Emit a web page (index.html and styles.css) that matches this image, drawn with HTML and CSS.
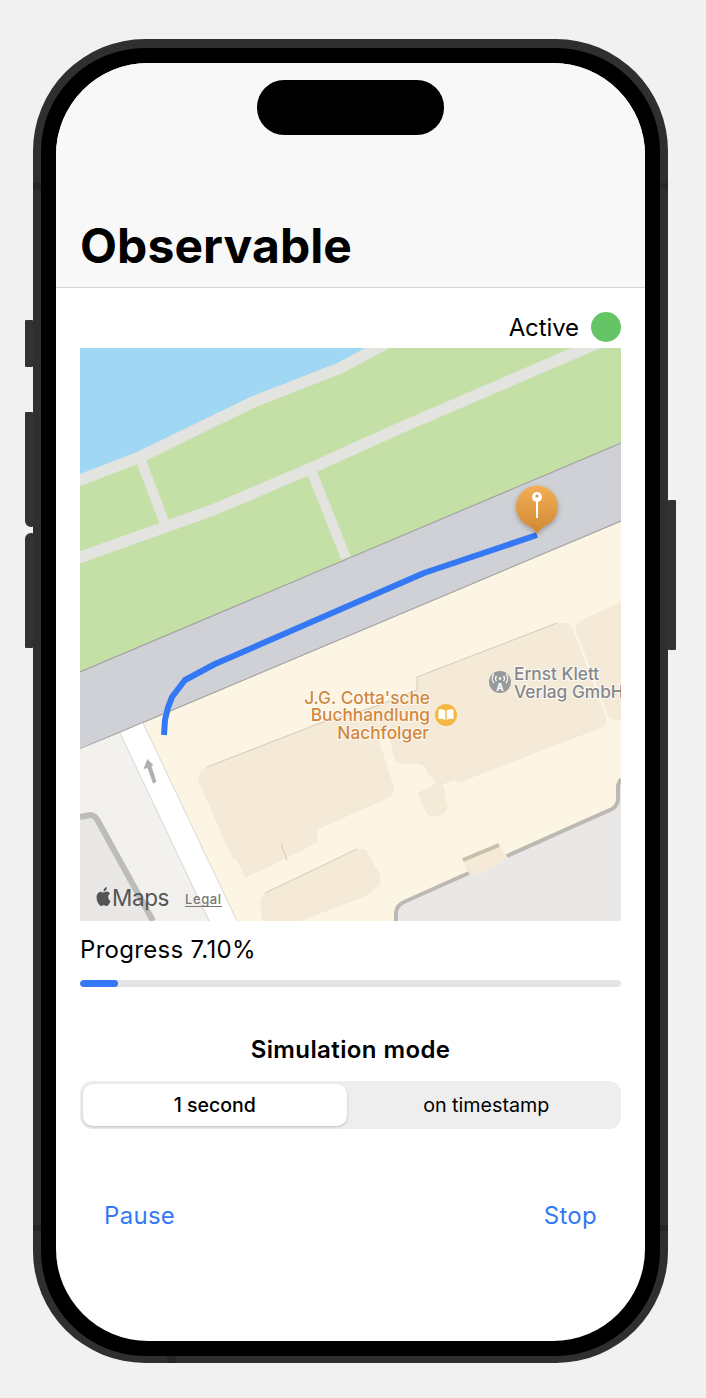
FILE: index.html
```html
<!DOCTYPE html>
<html>
<head>
	<title>Observable</title>
	<meta http-equiv="Content-Type" content="text/html;charset=utf-8">
	<link rel="stylesheet" href="styles.css">
</head>
<body>

	<div class="phone">
		<div class="side-btn mute"></div>
		<div class="side-btn vol-up"></div>
		<div class="side-btn vol-down"></div>
		<div class="side-btn power"></div>
		<div class="band band-lt"></div>
		<div class="band band-rt"></div>
		<div class="band band-lb"></div>
		<div class="band band-rb"></div>
		<div class="band-h"></div>

		<div class="screen">
			<div class="island"></div>

			<div class="navbar">
				<h1 class="nav-title">Observable</h1>
			</div>

			<div class="content">
				<div class="status-row">
					<span class="status-label">Active</span>
					<span class="status-dot"></span>
				</div>

				<!-- map uses page coordinates in its viewBox -->
				<svg class="map" viewBox="80 348 541 573" xmlns="http://www.w3.org/2000/svg">
					<defs>
						<linearGradient id="pinFill" x1="0" y1="0" x2="0" y2="1">
							<stop offset="0" stop-color="#f3ae55"/>
							<stop offset="1" stop-color="#cf8832"/>
						</linearGradient>
						<filter id="pinShadow" x="-30%" y="-30%" width="160%" height="160%">
							<feDropShadow dx="0" dy="2" stdDeviation="2.5" flood-color="#000" flood-opacity=".28"/>
						</filter>
					</defs>

					<!-- ground -->
					<rect x="80" y="348" width="541" height="573" fill="#fdf5e3"/>
					<polygon points="80,348 621,348 621,443 80,672" fill="#c4e0a6"/>
					<polygon points="80,348 373,348 340,368 253,402 140,457 80,480" fill="#a0d8f3"/>

					<!-- paths in the park -->
					<g fill="none" stroke="#e3e3df" stroke-width="11.5">
						<path d="M78,481 L140,457 L253,402 L340,368 L385,344"/>
						<path d="M78,558 L213,510 L307,470 L400,428 L600,342"/>
						<path d="M140,458 L165,524" stroke-width="10"/>
						<path d="M311,470 L346,558" stroke-width="10"/>
					</g>

					<!-- street -->
					<polygon points="80,672 621,443 621,521 80,749" fill="#cfd1d6"/>
					<path d="M80,672 L621,443 M80,749 L621,521" fill="none" stroke="#a3a3a3" stroke-width="1.2"/>

					<!-- left side of the side street -->
					<polygon points="80,749 120,733 210,921 80,921" fill="#f3f1ed"/>
					<path d="M80,819 L90,817 Q95,817 98,823 L152,921 L80,921 Z" fill="#e9e8e6"/>
					<path d="M80,817 L90,815 Q95,815 98,821 L153,921" fill="none" stroke="#bdbcba" stroke-width="6"/>
					<polygon points="120,733 143,723 237,921 210,921" fill="#fff"/>
					<path d="M120,733 L209,921 M143,723 L237,921" fill="none" stroke="#d8d8d6" stroke-width="1"/>
					<path d="M147.3,759 L153.3,765 L151.5,766 L156.5,782 L153,783.5 L147.5,768 L143.5,769 Z" fill="#b0b0b0"/>

					<!-- lower right block -->
					<path d="M396,921 L396,912 Q397,905 404,902 L612,809 Q617,806 618,800 L618,785 L621,779 L621,921 Z" fill="#e9e8e6"/>
					<path d="M396,921 L396,912 Q397,905 404,902 L612,809 Q617,806 618,800 L618,785 L621,779" fill="none" stroke="#bcb9b5" stroke-width="4"/>

					<!-- buildings -->
					<g fill="#f4ead7" stroke-linejoin="round">
						<path d="M207,767 L323,722 L377,706 L417,690 L417,677 L557,623 L565,623 Q571,624 573,630 L607,720 Q607,725 603,727 L458,783 L455,780 L438,786 L427,772 Q424,764 418,764 L402,764 Q397,763 395,760 L388,733 L378,737 L394,788 Q394,794 390,797 L317,830 L318,842 L287,858 L245,878 L237,860 L232,858 L230,853 L198,780 Q198,771 207,767 Z"/>
						<path d="M418,793 L435,784 L443,785 L448,807 Q446,815 437,816 L430,816 Q425,813 423,806 Z"/>
						<path d="M265,893 L357,849 L365,849 L380,875 L380,885 L364,897 L300,921 L262,921 L260,900 Z"/>
						<path d="M575,628 Q580,620 590,616 L621,602 L621,720 L615,720 Q610,719 608,715 Z"/>
						<path d="M463,862 L498,843 L508,858 L480,875 L470,875 Z"/>
					</g>
					<g fill="none" stroke="#d4cab6" stroke-width="1">
						<path d="M207,767 L323,722 L377,706 L417,690 L417,677 L557,623"/>
						<path d="M265,893 L357,849"/>
						<path d="M281,844 L287,860"/>
					</g>
					<path d="M463,860 L499,845" fill="none" stroke="#c8bfab" stroke-width="4"/>

					<!-- route -->
					<path class="route" d="M164,735 L165,720 Q167,708 172,697 L185,680 L215,664 L424,573 L537,535"/>

					<!-- pin -->
					<g filter="url(#pinShadow)">
						<path d="M537,534 Q535,530 529,526 A21,21 0 1 1 545,526 Q539,530 537,534 Z" fill="url(#pinFill)"/>
					</g>
					<line x1="537" y1="497" x2="537" y2="518" stroke="#fff" stroke-width="2"/>
					<circle cx="537" cy="497" r="5" fill="#fff"/>
					<circle cx="537" cy="496" r="1.6" fill="#d99a48"/>

					<!-- places -->
					<g class="poi poi-orange" text-anchor="end">
						<text x="430" y="704">J.G. Cotta'sche</text>
						<text x="430" y="721">Buchhandlung</text>
						<text x="429" y="739">Nachfolger</text>
					</g>
					<circle cx="446" cy="715" r="11" fill="#f4b842"/>
					<path d="M445.3,710.5 Q442,708.8 438.5,709.5 L438.5,719 Q442,718.4 445.3,720 Z M446.7,710.5 Q450,708.8 453.5,709.5 L453.5,719 Q450,718.4 446.7,720 Z" fill="#fff"/>

					<circle cx="500" cy="682" r="11" fill="#98999b"/>
					<text class="antenna-a" x="500" y="691" text-anchor="middle">A</text>
					<path d="M496.5,681 A4,4 0 0 1 496.5,676 M503.5,681 A4,4 0 0 0 503.5,676 M494,683 A7,7 0 0 1 494,674 M506,683 A7,7 0 0 0 506,674" fill="none" stroke="#fff" stroke-width="1.3"/>
					<circle cx="500" cy="678.5" r="1.3" fill="#fff"/>
					<g class="poi poi-gray">
						<text x="514" y="680">Ernst Klett</text>
						<text x="514" y="698">Verlag GmbH</text>
					</g>

					<!-- attribution -->
					<svg x="95" y="887" width="17" height="19" viewBox="0 0 24 24" preserveAspectRatio="none">
						<path fill="#555" d="M12.152 6.896c-.948 0-2.415-1.078-3.96-1.04-2.04.027-3.91 1.183-4.961 3.014-2.117 3.675-.546 9.103 1.519 12.09 1.013 1.454 2.208 3.09 3.792 3.039 1.52-.065 2.09-.987 3.935-.987 1.831 0 2.35.987 3.96.948 1.637-.026 2.676-1.48 3.676-2.948 1.156-1.688 1.636-3.325 1.662-3.415-.039-.013-3.182-1.221-3.22-4.857-.026-3.04 2.48-4.494 2.597-4.559-1.429-2.09-3.623-2.324-4.39-2.376-2-.156-3.675 1.09-4.61 1.09zM15.53 3.83c.843-1.012 1.4-2.427 1.245-3.83-1.207.052-2.662.805-3.532 1.818-.78.896-1.454 2.338-1.273 3.714 1.338.104 2.715-.688 3.559-1.701"/>
					</svg>
					<text class="maps-word" x="112" y="906">Maps</text>
					<text class="maps-legal" x="185" y="904">Legal</text>
					<line x1="185" y1="906.5" x2="222" y2="906.5" stroke="#777" stroke-width="1"/>
				</svg>

				<div class="progress-label">Progress 7.10%</div>
				<div class="progress-track">
					<div class="progress-fill" style="width: 7.1%"></div>
				</div>

				<h2 class="section-title">Simulation mode</h2>
				<div class="segments">
					<div class="segment selected">1 second</div>
					<div class="segment other">on timestamp</div>
				</div>

				<div class="actions">
					<span class="action">Pause</span>
					<span class="action">Stop</span>
				</div>
			</div>
		</div>
	</div>

</body>
</html>
```

FILE: styles.css
```css
body
{
	margin: 0;
	height: 1398px;
	box-sizing: border-box;
	overflow: hidden;
	padding: 39px 0 0 33px;
	background: #f1f1f1;
	font-family: Inter, "Liberation Sans", sans-serif;
	color: #000;
}

/* phone frame */
.phone
{
	position: relative;
	box-sizing: border-box;
	width: 635px;
	height: 1324px;
	padding: 15px;
	background: #000;
	border: 8px solid #2f2f2f;
	border-top-width: 9px;
	border-bottom-width: 7px;
	border-radius: 112px;
}

.side-btn
{
	position: absolute;
	width: 8px;
	background: #333;
	border-radius: 1px;
}

.mute { left: -16px; top: 272px; height: 47px; }
.vol-up { left: -16px; top: 364px; height: 115px; border-bottom-left-radius: 6px; }
.vol-down { left: -16px; top: 485px; height: 115px; border-top-left-radius: 6px; }
.power { right: -16px; top: 452px; height: 150px; }

.band
{
	position: absolute;
	width: 8px;
	height: 6px;
	background: #262626;
}

.band-lt { left: -8px; top: 135px; }
.band-rt { right: -8px; top: 135px; }
.band-lb { left: -8px; top: 1177px; }
.band-rb { right: -8px; top: 1177px; }

.band-h
{
	position: absolute;
	left: 126px;
	bottom: -7px;
	width: 9px;
	height: 7px;
	background: #262626;
}

/* screen */
.screen
{
	position: relative;
	display: flex;
	flex-direction: column;
	width: 589px;
	height: 1278px;
	overflow: hidden;
	background: #fff;
	border-radius: 92px;
}

.island
{
	position: absolute;
	left: 201px;
	top: 17px;
	width: 187px;
	height: 55px;
	background: #000;
	border-radius: 27px;
}

.navbar
{
	box-sizing: border-box;
	height: 225px;
	padding: 151px 24px 0 24px;
	background: #f8f8f8;
	border-bottom: 1px solid #d5d5d5;
}

.nav-title
{
	margin: 0;
	font-size: 48px;
	line-height: 64px;
	font-weight: 700;
	letter-spacing: 0.1px;
}

.content
{
	display: flex;
	flex-direction: column;
	padding: 0 24px;
}

.status-row
{
	display: flex;
	justify-content: flex-end;
	align-items: center;
	gap: 12px;
	height: 30px;
	margin-top: 24px;
	margin-bottom: 6px;
}

.status-label
{
	position: relative;
	top: 1px;
	font-size: 24px;
	line-height: 30px;
	letter-spacing: -0.1px;
}

.status-dot
{
	width: 30px;
	height: 30px;
	border-radius: 50%;
	background: #65c466;
}

.map
{
	display: block;
	width: 541px;
	height: 573px;
}

.route
{
	fill: none;
	stroke: #3478f6;
	stroke-width: 6;
	stroke-linejoin: round;
}

.poi text
{
	font-size: 17.3px;
	font-weight: 500;
	paint-order: stroke;
	stroke: rgba(255, 255, 255, .75);
	stroke-width: 2px;
}

.poi-orange text { fill: #d3873a; }
.poi-gray text { fill: #85878a; }

.antenna-a
{
	font-size: 10px;
	font-weight: 700;
	fill: #fff;
}

.maps-word
{
	font-size: 22.5px;
	letter-spacing: -0.4px;
	fill: #555;
}

.maps-legal
{
	font-size: 13px;
	font-weight: 500;
	letter-spacing: 0.6px;
	fill: #777;
}

.progress-label
{
	margin-top: 14px;
	font-size: 24px;
	line-height: 30px;
	letter-spacing: 0.3px;
}

.progress-track
{
	height: 7px;
	margin-top: 15px;
	overflow: hidden;
	background: #e4e4e6;
	border-radius: 4px;
}

.progress-fill
{
	height: 100%;
	background: #3478f6;
	border-radius: 4px;
}

.section-title
{
	margin: 48px 0 16px 0;
	text-align: center;
	font-size: 24px;
	line-height: 30px;
	font-weight: 600;
	letter-spacing: 0.4px;
}

.segments
{
	display: grid;
	grid-template-columns: 1fr 1fr;
	box-sizing: border-box;
	height: 48px;
	padding: 3px;
	background: #eeeeef;
	border-radius: 12px;
}

.segment
{
	text-align: center;
	font-size: 19.5px;
	line-height: 42px;
	font-weight: 500;
}

.segment.selected
{
	margin-right: 4px;
	background: #fff;
	border-radius: 10px;
	box-shadow: 0 1px 3px rgba(0, 0, 0, .2);
}

.segment.other
{
	padding-left: 4px;
	font-size: 19.7px;
	font-weight: 400;
}

.actions
{
	display: flex;
	justify-content: space-between;
	margin-top: 72px;
	padding: 0 24px;
}

.action
{
	font-size: 24px;
	line-height: 30px;
	letter-spacing: 0.3px;
	color: #3478f6;
}
```
